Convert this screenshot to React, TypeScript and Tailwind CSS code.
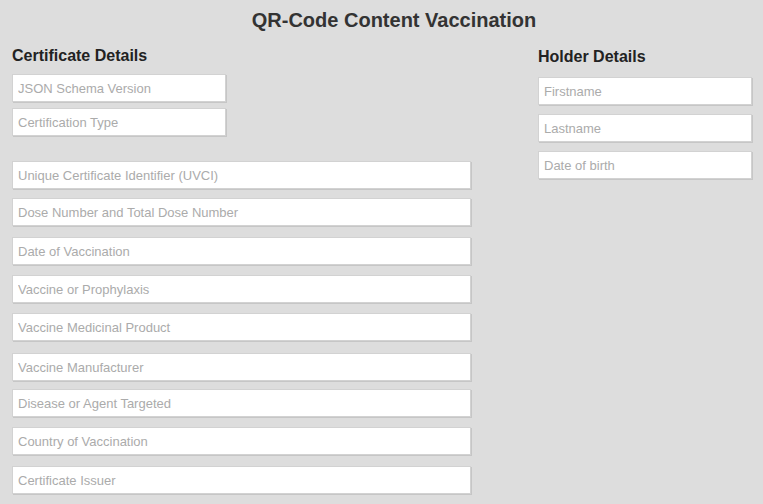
import React from 'react';

type Field = { label: string; mt: string };

const certTop: Field[] = [
  { label: 'JSON Schema Version', mt: 'mt-[9px]' },
  { label: 'Certification Type', mt: 'mt-[6px]' },
];

const certMain: Field[] = [
  { label: 'Unique Certificate Identifier (UVCI)', mt: 'mt-[25px]' },
  { label: 'Dose Number and Total Dose Number', mt: 'mt-[9px]' },
  { label: 'Date of Vaccination', mt: 'mt-[11px]' },
  { label: 'Vaccine or Prophylaxis', mt: 'mt-[10px]' },
  { label: 'Vaccine Medicinal Product', mt: 'mt-[10px]' },
  { label: 'Vaccine Manufacturer', mt: 'mt-[12px]' },
  { label: 'Disease or Agent Targeted', mt: 'mt-[8px]' },
  { label: 'Country of Vaccination', mt: 'mt-[10px]' },
  { label: 'Certificate Issuer', mt: 'mt-[11px]' },
];

const holder: Field[] = [
  { label: 'Firstname', mt: 'mt-[11px]' },
  { label: 'Lastname', mt: 'mt-[9px]' },
  { label: 'Date of birth', mt: 'mt-[9px]' },
];

const Input: React.FC<{ field: Field; width: string }> = ({ field, width }) => (
  <input
    placeholder={field.label}
    className={`${field.mt} ${width} block h-[28px] bg-white border border-[#d2d2d2] shadow-[1px_1px_0_#c6c6c6] px-[5px] text-[13px] text-[#333] placeholder:text-[#ababab] outline-none`}
  />
);

const App: React.FC = () => {
  return (
    <div className="w-[763px] h-[504px] overflow-hidden bg-[#dddddd] font-['Liberation_Sans',Arial,sans-serif]">
      <h1 className="pt-[9px] pl-[25px] text-center text-[20px] leading-[23px] font-bold text-[#333]">
        QR-Code Content Vaccination
      </h1>

      <div className="flex px-3">
        <div className="w-[459px]">
          <h2 className="mt-[15px] text-[16px] leading-[18px] font-bold text-[#222]">Certificate Details</h2>
          {certTop.map((f) => (
            <Input key={f.label} field={f} width="w-[214px]" />
          ))}
          {certMain.map((f) => (
            <Input key={f.label} field={f} width="w-[459px]" />
          ))}
        </div>

        <div className="ml-[67px] w-[214px]">
          <h2 className="mt-[16px] text-[16px] leading-[18px] font-bold text-[#222]">Holder Details</h2>
          {holder.map((f) => (
            <Input key={f.label} field={f} width="w-[214px]" />
          ))}
        </div>
      </div>
    </div>
  );
};

export default App;
